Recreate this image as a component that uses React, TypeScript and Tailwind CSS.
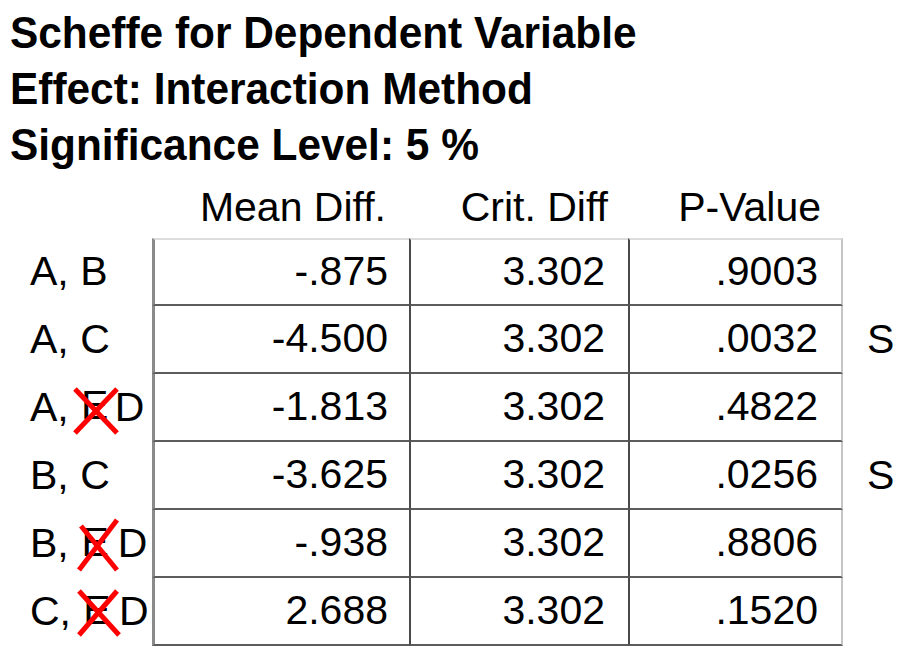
import React from "react";

type Row = {
  a: string;
  b: string;
  struck: boolean;
  mean: string;
  crit: string;
  p: string;
  s: string;
};

const rows: Row[] = [
  { a: "A", b: "B", struck: false, mean: "-.875", crit: "3.302", p: ".9003", s: "" },
  { a: "A", b: "C", struck: false, mean: "-4.500", crit: "3.302", p: ".0032", s: "S" },
  { a: "A", b: "D", struck: true, mean: "-1.813", crit: "3.302", p: ".4822", s: "" },
  { a: "B", b: "C", struck: false, mean: "-3.625", crit: "3.302", p: ".0256", s: "S" },
  { a: "B", b: "D", struck: true, mean: "-.938", crit: "3.302", p: ".8806", s: "" },
  { a: "C", b: "D", struck: true, mean: "2.688", crit: "3.302", p: ".1520", s: "" },
];

function Struck({ variant }: { variant: number }) {
  if (variant === 0) {
    return (
      <span className="relative ml-[4px] flex h-[48px] w-[42px] items-center justify-center">
        <span className="translate-x-[1px] translate-y-[-2px]">E</span>
        <svg className="absolute left-0 top-[3px]" width="46" height="48" viewBox="0 0 46 48">
          <line x1="2" y1="2" x2="44" y2="46" stroke="#ff0000" strokeWidth="5" />
          <line x1="44" y1="2" x2="2" y2="46" stroke="#ff0000" strokeWidth="5" />
        </svg>
      </span>
    );
  }
  if (variant === 1) {
    return (
      <span className="relative ml-[8px] flex h-[48px] w-[41px] items-center justify-center">
        <span className="translate-x-[-2px] translate-y-[-1px]">E</span>
        <svg className="absolute left-[0px] top-[-2px]" width="42" height="54" viewBox="0 0 42 54">
          <line x1="2" y1="52" x2="40" y2="2" stroke="#ff0000" strokeWidth="5" />
          <line x1="4" y1="8" x2="40" y2="52" stroke="#ff0000" strokeWidth="5" />
        </svg>
      </span>
    );
  }
  return (
    <span className="relative ml-[6px] flex h-[48px] w-[42px] items-center justify-center">
      <span className="translate-x-[-1px] translate-y-[-1px]">E</span>
      <svg className="absolute left-0 top-[1px]" width="44" height="48" viewBox="0 0 44 48">
        <line x1="2" y1="2" x2="42" y2="46" stroke="#ff0000" strokeWidth="5" />
        <line x1="40" y1="2" x2="2" y2="46" stroke="#ff0000" strokeWidth="5" />
      </svg>
    </span>
  );
}

export default function App() {
  let struckIdx = 0;
  return (
    <div
      className="h-[657px] w-[904px] overflow-hidden bg-white text-black"
      style={{ fontFamily: '"Liberation Sans", Arial, sans-serif' }}
    >
      <div className="pl-[10px] pt-[5px] text-[42.4px] font-bold leading-[56px]">
        <div>
          <span className="inline-block origin-center scale-y-[1.06]">Scheffe for Dependent Variable</span>
        </div>
        <div>
          <span className="inline-block origin-center scale-y-[1.06]">Effect: Interaction Method</span>
        </div>
        <div>
          <span className="inline-block origin-center scale-y-[1.06]">Significance Level: 5 %</span>
        </div>
      </div>
      <div className="mt-[5px] grid grid-cols-[152px_257px_219px_215px_1fr] text-[41px]">
        <div className="h-[60px]" />
        <div className="flex h-[60px] items-center justify-end pr-[23px]">Mean Diff.</div>
        <div className="flex h-[60px] items-center justify-end pr-[20px]">Crit. Diff</div>
        <div className="flex h-[60px] items-center justify-end pr-[22px]">P-Value</div>
        <div className="h-[60px]" />
        {rows.map((r, i) => {
          const v = r.struck ? struckIdx++ : -1;
          return (
            <React.Fragment key={i}>
              <div className="flex h-[68px] items-center pl-[30px]">
                {r.struck ? (
                  <>
                    <span>{r.a},</span>
                    <Struck variant={v} />
                    <span className="relative">{r.b}</span>
                  </>
                ) : (
                  <span>
                    {r.a}, {r.b}
                  </span>
                )}
              </div>
              <div
                className={
                  "flex h-[68px] items-center justify-end border-b-2 border-l-[3px] border-b-[#5c5c5c] border-l-[#8a8a8a] pr-[21px] " +
                  (i === 0 ? "border-t-2 border-t-[#dcdcdc]" : "")
                }
              >
                {r.mean}
              </div>
              <div
                className={
                  "flex h-[68px] items-center justify-end border-b-2 border-l-2 border-b-[#5c5c5c] border-l-[#4a4a4a] pr-[23px] " +
                  (i === 0 ? "border-t-2 border-t-[#dcdcdc]" : "")
                }
              >
                {r.crit}
              </div>
              <div
                className={
                  "flex h-[68px] items-center justify-end border-b-2 border-l-2 border-r-2 border-b-[#5c5c5c] border-l-[#4a4a4a] border-r-[#c4c4c4] pr-[23px] " +
                  (i === 0 ? "border-t-2 border-t-[#dcdcdc]" : "")
                }
              >
                {r.p}
              </div>
              <div className="flex h-[68px] items-center pl-[24px]">{r.s}</div>
            </React.Fragment>
          );
        })}
      </div>
    </div>
  );
}
